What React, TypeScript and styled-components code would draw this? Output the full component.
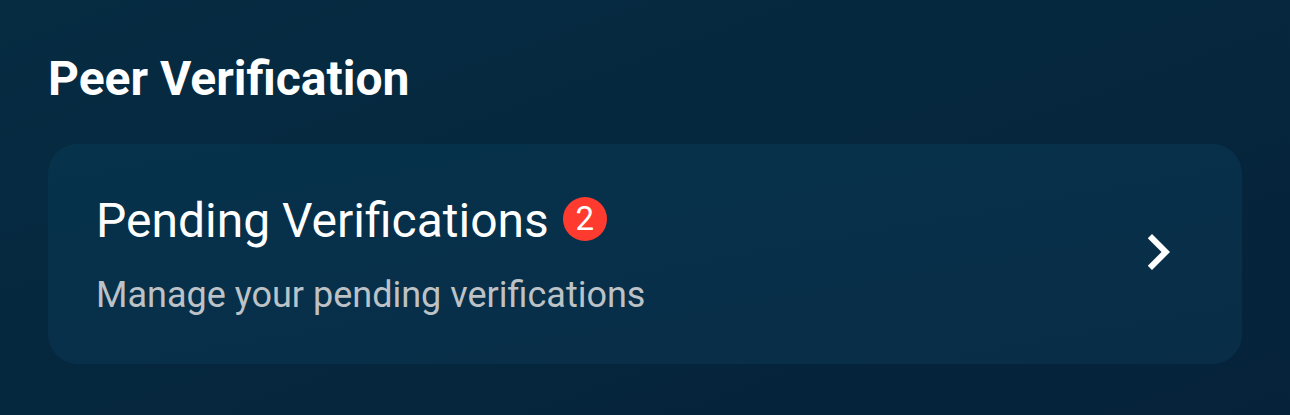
import React from 'react';
import styled, { createGlobalStyle } from 'styled-components';

const colors = {
  pageTop: '#062c42',
  pageBottom: '#05223a',
  cardTop: '#06324c',
  cardBottom: '#092d47',
  text: '#ffffff',
  textMuted: '#bcc2c6',
  badge: '#ff3b30',
};

const GlobalStyle = createGlobalStyle`
  html, body {
    margin: 0;
    padding: 0;
    height: 100%;
  }
  body {
    font-family: Roboto, 'Liberation Sans', sans-serif;
    background: linear-gradient(160deg, ${colors.pageTop} 0%, ${colors.pageBottom} 100%);
    -webkit-font-smoothing: antialiased;
  }
  #root {
    min-height: 100%;
  }
`;

const Screen = styled.div`
  box-sizing: border-box;
  width: 1290px;
  height: 415px;
  padding: 50px 48px 0;
  display: flex;
  flex-direction: column;
`;

const SectionTitle = styled.h2`
  margin: 0 0 37px;
  font-size: 48px;
  font-weight: 700;
  line-height: normal;
  color: ${colors.text};
`;

const Card = styled.button`
  box-sizing: border-box;
  width: 100%;
  height: 220px;
  border: none;
  border-radius: 30px;
  padding: 0 48px;
  background: linear-gradient(170deg, ${colors.cardTop} 0%, ${colors.cardBottom} 100%);
  display: flex;
  align-items: center;
  justify-content: space-between;
  text-align: left;
  cursor: pointer;
  font-family: inherit;
`;

const CardBody = styled.div`
  display: flex;
  flex-direction: column;
  gap: 25px;
`;

const HeadingRow = styled.div`
  display: flex;
  align-items: center;
  gap: 14px;
`;

const CardTitle = styled.span`
  font-size: 48px;
  font-weight: 400;
  line-height: normal;
  color: ${colors.text};
`;

const Badge = styled.span`
  width: 44px;
  height: 44px;
  border-radius: 50%;
  background: ${colors.badge};
  color: #fff;
  font-size: 33px;
  line-height: 1;
  display: inline-flex;
  align-items: center;
  justify-content: center;
  margin-top: -4px;
`;

const CardSubtitle = styled.span`
  font-size: 36px;
  font-weight: 400;
  line-height: normal;
  color: ${colors.textMuted};
`;

const Chevron = styled.svg`
  width: 72px;
  height: 72px;
  flex-shrink: 0;
  margin-top: -4px;
  fill: ${colors.text};
`;

const ChevronRight: React.FC = () => (
  <Chevron viewBox="0 0 24 24" aria-hidden="true">
    <path d="M10 6 8.59 7.41 13.17 12l-4.58 4.59L10 18l6-6z" />
  </Chevron>
);

const App: React.FC = () => (
  <>
    <GlobalStyle />
    <Screen>
      <SectionTitle>Peer Verification</SectionTitle>
      <Card type="button">
        <CardBody>
          <HeadingRow>
            <CardTitle>Pending Verifications</CardTitle>
            <Badge>2</Badge>
          </HeadingRow>
          <CardSubtitle>Manage your pending verifications</CardSubtitle>
        </CardBody>
        <ChevronRight />
      </Card>
    </Screen>
  </>
);

export default App;
